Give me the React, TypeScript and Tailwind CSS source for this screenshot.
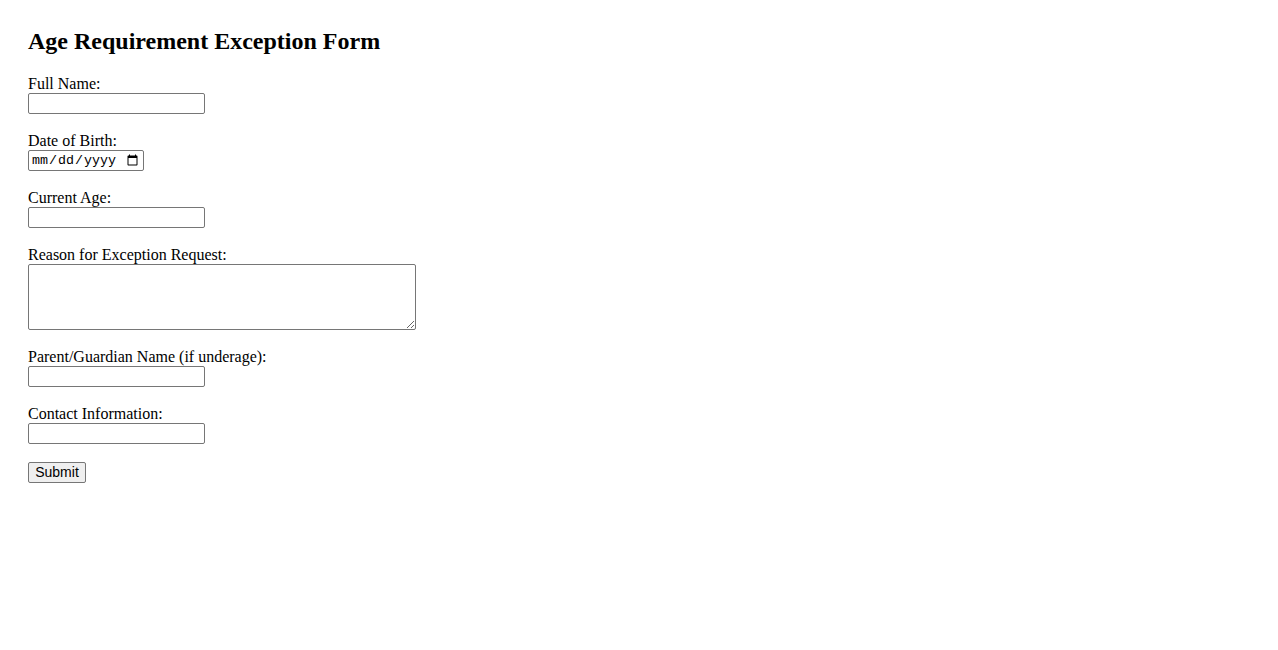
import { type PropsWithChildren } from "react"

const inputBox =
  "block h-[21px] w-[177px] rounded-[2px] border border-[#767676] bg-white px-[2px] font-['Liberation_Sans',Arial,sans-serif] text-[13.33px] text-black outline-none"

export default function App() {
  return (
    <main className="min-h-[650px] bg-white pt-[28px] pl-[28px] font-['Liberation_Serif','Times_New_Roman',serif] text-[16px] text-black">
      <h2 className="text-[24px] font-bold leading-[27.6px]">
        Age Requirement Exception Form
      </h2>
      <form className="mt-[19px] flex flex-col" onSubmit={(e) => e.preventDefault()}>
        <Field label="Full Name:">
          <input type="text" className={inputBox} />
        </Field>
        <Field label="Date of Birth:">
          <input
            type="date"
            className="block h-[21px] w-[116px] rounded-[2px] border border-[#767676] bg-white px-[2px] font-['Liberation_Mono',monospace] text-[13.33px] text-black outline-none"
          />
        </Field>
        <Field label="Current Age:">
          <input type="number" className={inputBox} />
        </Field>
        <Field label="Reason for Exception Request:">
          <textarea className="block h-[66px] w-[388px] resize rounded-[2px] border border-[#767676] bg-white px-[2px] font-['Liberation_Mono',monospace] text-[13.33px] outline-none" />
        </Field>
        <Field label="Parent/Guardian Name (if underage):">
          <input type="text" className={inputBox} />
        </Field>
        <Field label="Contact Information:">
          <input type="text" className={inputBox} />
        </Field>
        <button
          type="submit"
          className="block h-[21px] w-[58px] rounded-[2px] border border-[#767676] bg-[#efefef] font-['Liberation_Sans',Arial,sans-serif] text-[14px] leading-none text-black"
        >
          Submit
        </button>
      </form>
    </main>
  )
}

function Field({ label, children }: PropsWithChildren<{ label: string }>) {
  return (
    <div className="mb-[17.6px]">
      <label className="block leading-[18.4px]">{label}</label>
      {children}
    </div>
  )
}
